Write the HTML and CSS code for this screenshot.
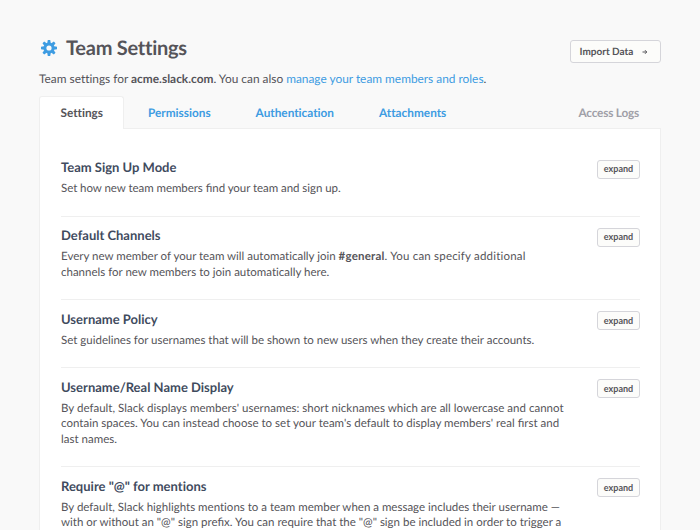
FILE: index.html
```html
<!DOCTYPE html>
<html lang="en">
<head>
<meta charset="utf-8">
<title>Team Settings</title>
<link rel="stylesheet" href="styles.css">
</head>
<body>
<main class="page">
  <header class="header">
    <h1 class="title">
      <svg class="gear" viewBox="-10 -10 20 20" aria-hidden="true">
        <g fill="currentColor">
          <path id="tooth" d="M-1.7 -5L-1.2 -8H1.2L1.7 -5V5L1.2 8H-1.2L-1.7 5Z"/>
          <use href="#tooth" transform="rotate(45)"/>
          <use href="#tooth" transform="rotate(90)"/>
          <use href="#tooth" transform="rotate(135)"/>
          <circle r="5.4"/>
        </g>
        <circle r="2.6" fill="#f9f9f9"/>
      </svg>
      <span>Team Settings</span>
    </h1>
    <a class="btn import" href="#"><span>Import Data</span>
      <svg class="arrow" viewBox="0 0 6 6" aria-hidden="true"><path d="M0.5 3h4M3 1.2l1.8 1.8L3 4.8" fill="none" stroke="currentColor"/></svg>
    </a>
  </header>
  <p class="intro">Team settings for <b>acme.slack.com</b>. You can also <a href="#">manage your team members and roles</a>.</p>
  <nav class="tabs">
    <a class="tab active" href="#">Settings</a>
    <a class="tab" href="#">Permissions</a>
    <a class="tab" href="#">Authentication</a>
    <a class="tab" href="#">Attachments</a>
    <a class="tab logs" href="#">Access Logs</a>
  </nav>
  <div class="panel">
    <section class="row">
      <div class="text"><h2>Team Sign Up Mode</h2><p class="tight">Set how new team members <span class="lig">fi</span>nd your team and sign up.</p></div>
      <button class="btn expand">expand</button>
    </section>
    <section class="row">
      <div class="text"><h2>Default Channels</h2><p>Every new member of your team will automatically join <span class="loose"><b>#general</b>. You can specify additional</span><br>channels for new members to join automatically here.</p></div>
      <button class="btn expand">expand</button>
    </section>
    <section class="row">
      <div class="text"><h2>Username Policy</h2><p>Set guidelines for usernames that will be shown to new users when they create their accounts.</p></div>
      <button class="btn expand">expand</button>
    </section>
    <section class="row">
      <div class="text"><h2>Username/Real Name Display</h2><p class="wide">By default, Slack displays members' usernames: short nicknames which are all lowercase and cannot<br>contain spaces. You can instead choose to set your team's default to display members' real <span class="lig">fi</span>rst and<br>last names.</p></div>
      <button class="btn expand">expand</button>
    </section>
    <section class="row">
      <div class="text"><h2>Require "@" for mentions</h2><p>By default, Slack highlights mentions to a team member when a message includes their username —<br>with or without an "@" sign pre<span class="lig">fi</span>x. You can require that the "@" sign be included in order to trigger a</p></div>
      <button class="btn expand">expand</button>
    </section>
  </div>
</main>
</body>
</html>
```

FILE: styles.css
```css
* { box-sizing: border-box; }
html, body { height: 530px; overflow: hidden; }
body {
  margin: 0;
  background: #f9f9f9;
  color: #555459;
  font-family: Lato, "Liberation Sans", sans-serif;
  font-size: 12px;
  font-variant-ligatures: none;
  text-rendering: geometricPrecision;
}
.tight { letter-spacing: -0.05px; }
.wide { letter-spacing: 0.02px; }
.loose { letter-spacing: 0.2px; }
.lig { font-variant-ligatures: normal; letter-spacing: 0; }
a { color: #3e9ce2; text-decoration: none; }
h1, h2, p { margin: 0; }
.page { width: 622px; margin-left: 39px; padding-top: 32px; }
.header { display: flex; justify-content: space-between; height: 32px; }
.title { display: flex; align-items: center; gap: 7px; font-size: 20px; line-height: 32px; letter-spacing: -0.25px; }
.gear { width: 20px; height: 20px; color: #3e9ce2; }
.btn {
  background: #fcfcfa;
  border: 1px solid #d5d5da;
  border-radius: 3px;
  color: #555459;
  font-family: inherit;
  font-weight: 700;
  text-align: center;
}
.import { display: flex; align-items: center; gap: 9px; width: 91px; height: 23px; margin-top: 8px; padding-left: 8.5px; font-size: 10px; }
.arrow { width: 6px; height: 6px; }
.intro { margin-top: 6px; font-size: 11.88px; line-height: 18px; }
.tabs { display: flex; height: 32px; margin-top: 8px; font-size: 11.8px; font-weight: 700; line-height: 34px; }
.tab { padding: 0 45px 0 0; }
.tab.active {
  width: 85px;
  height: 33px;
  padding: 0 0 0 20.5px;
  margin-right: 24px;
  background: #fff;
  border: 1px solid #efefef;
  border-bottom: 0;
  border-radius: 3px 3px 0 0;
  color: #555459;
  line-height: 32px;
  z-index: 1;
}
.tab.logs { margin-left: auto; padding-right: 22px; color: #a0a0a8; letter-spacing: -0.2px; }
.panel { height: 402px; overflow: hidden; background: #fff; border: 1px solid #efefef; border-bottom: 0; padding: 19.5px 20px 0 21px; }
.row { display: flex; justify-content: space-between; padding: 9.5px 0 19px; border-bottom: 1px solid #efefef; }
.row h2 { font-size: 13px; line-height: 19px; color: #3f4b5e; }
.row p { margin-top: 4px; font-size: 11.5px; line-height: 15.5px; white-space: nowrap; }
.expand { width: 43px; height: 19px; padding: 0; margin-top: 1.5px; font-size: 9px; line-height: 16px; }
```
